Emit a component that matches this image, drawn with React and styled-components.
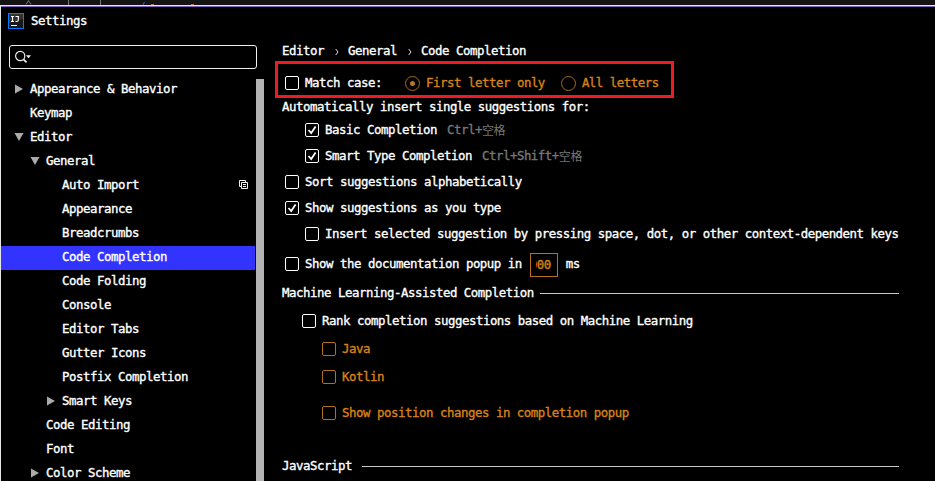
import React from 'react';
import styled, { createGlobalStyle } from 'styled-components';

const Global = createGlobalStyle`
  * { box-sizing: border-box; }
  body { margin: 0; background: #000; overflow: hidden; }
`;

const Screen = styled.div`
  width: 935px;
  height: 481px;
  display: flex;
  flex-direction: column;
  overflow: hidden;
  background: #000;
  color: #fff;
  font: 12.4px/16px 'DejaVu Sans Mono', 'Noto Sans CJK SC', monospace;
  letter-spacing: -0.465px;
  -webkit-text-stroke: 0.35px currentColor;
  white-space: pre;
`;
const Backdrop = styled.div`
  height: 5px;
  flex: none;
  background: #141414;
  svg { display: block; }
`;
const Dialog = styled.div`
  flex: 1;
  min-height: 0;
  display: flex;
  flex-direction: column;
  border-top: 1px solid #e6e6ee;
  border-left: 1px solid #e6e6e6;
`;
const TitleBar = styled.header`
  height: 29px;
  flex: none;
  display: flex;
  align-items: center;
  gap: 7px;
  padding-left: 7px;
  border-top: 1px solid #8360bf;
`;
const Body = styled.div`
  flex: 1;
  min-height: 0;
  display: flex;
`;
const Sidebar = styled.aside`
  width: 273px;
  flex: none;
  padding-top: 10px;
`;
const Search = styled.div`
  width: 248px;
  height: 24px;
  margin: 0 0 9px 8px;
  padding-left: 5px;
  display: flex;
  align-items: center;
  border: 1px solid #f0f0f0;
  border-radius: 3px;
`;
const TreeArea = styled.div`
  display: flex;
`;
const Tree = styled.nav`
  width: 254px;
`;
const ScrollBar = styled.div`
  width: 8px;
  margin: 1px 0 0 1px;
  background: #b3b3b3;
`;
const TreeRow = styled.div`
  height: 24px;
  display: flex;
  align-items: center;
  padding: 0 7px 3px ${p => 13 + p.$level * 16}px;
  background: ${p => (p.$selected ? '#3333ff' : 'transparent')};
`;
const Arrow = styled.span`
  width: 16px;
  height: 10px;
  flex: none;
  margin-top: 1px;
  svg { display: block; }
`;
const TreeLabel = styled.span`
  flex: 1;
`;
const Content = styled.main`
  flex: 1;
  padding: 8px 36px 0 8px;
`;
const Row = styled.div`
  height: ${p => p.$h || 26}px;
  display: flex;
  align-items: center;
  padding-left: ${p => p.$indent || 0}px;
  color: ${p => (p.$disabled ? '#d98218' : '#fff')};
`;
const Highlight = styled.div`
  width: 399px;
  height: 37px;
  margin: 2px 0 0 -7px;
  padding: 3px 0 0 7px;
  border: 3px solid #ed1c24;
  display: flex;
  align-items: flex-start;
`;
const HighlightRow = styled(Row)`
  height: 32px;
  margin: 0 0 0 -3px;
`;
const Box = styled.span`
  width: 14px;
  height: 14px;
  flex: none;
  margin-right: 6px;
  border: 1px solid ${p => (p.$disabled ? '#b06f22' : '#fff')};
  border-radius: 2px;
  svg { display: block; }
`;
const Radio = styled.span`
  width: 15px;
  height: 15px;
  flex: none;
  display: grid;
  place-items: center;
  margin: 0 6px 0 ${p => p.$gap}px;
  border: 1px solid #a66a22;
  border-radius: 50%;
`;
const Dot = styled.span`
  width: 5px;
  height: 5px;
  border-radius: 50%;
  background: #b5762b;
`;
const Label = styled.span`
  margin-top: -1px;
  color: ${p => (p.$amber ? '#d98218' : 'inherit')};
`;
const Shortcut = styled(Label)`
  margin-left: 10px;
  color: #777;
  display: flex;
`;
const Cjk = styled.span`
  font-family: 'Noto Sans CJK SC', sans-serif;
  font-size: 12px;
  letter-spacing: -0.3px;
  -webkit-text-stroke: 0;
`;
const Delay = styled.span`
  width: 28px;
  height: 24px;
  margin: 2px 8px 0 8px;
  padding: 0 6px 0 5px;
  display: flex;
  align-items: center;
  border: 1px solid #b87020;
  color: #d98218;
`;
const DelayText = styled.span`
  width: 15px;
  overflow: hidden;
  display: flex;
  justify-content: flex-end;
`;
const Rule = styled.span`
  flex: 1;
  height: 1px;
  margin: 0 0 0 ${p => p.$gap}px;
  background: #c8c8c8;
`;
const Separator = styled.svg`
  margin: 1px 9px 0 11px;
`;

const LogoIcon = () => (
  <svg width="16" height="16" viewBox="0 0 16 16" fill="none">
    <rect x=".5" y=".5" width="15" height="15" fill="#17181b" stroke="#087cfa" />
    <path d="M1 1h14v5L1 10z" fill="#444" opacity=".6" />
    <path d="M3 3.5h3M4.5 3.5v5M3 8.500h3M7.500 3.500h3.500M10.300 3.500V7q0 1.500-1.500 1.500H7.500" stroke="#fff" strokeWidth="1.100" />
    <path d="M3 12.500h6" stroke="#fff" />
  </svg>
);

const SearchIcon = () => (
  <svg width="18" height="14" viewBox="0 0 18 14" fill="none">
    <circle cx="5.2" cy="6" r="4.6" stroke="#eee" strokeWidth="1.2" />
    <path d="M8.5 9.3l3 3" stroke="#eee" strokeWidth="1.7" />
    <path d="M11 5.2h5l-2.5 3z" fill="#eee" />
  </svg>
);

const CopyIcon = () => (
  <svg width="9" height="9" viewBox="0 0 9 9" fill="none" stroke="#f2f2f2">
    <path d="M2 6.5H.5v-6h6V2M2.5 2.5h6v6h-6zM4 4.5h3M4 6.5h3" />
  </svg>
);

const TreeArrow = ({ state }) => (
  <Arrow>
    <svg width="10" height="10" viewBox="0 0 10 10" fill="#ababab">
      {state === 'open' && <path d="M.5 1h9L5 9z" />}
      {state === 'closed' && <path d="M1 .5v9L9 5z" />}
    </svg>
  </Arrow>
);

const Check = ({ on, disabled }) => (
  <Box $disabled={disabled}>
    {on && (
      <svg width="12" height="12" viewBox="0 0 12 12" fill="none">
        <path d="M2.5 6l2.7 3L9.6 2.6" stroke="#fff" strokeWidth="1.8" />
      </svg>
    )}
  </Box>
);

const Chevron = () => (
  <Separator width="4" height="8" viewBox="0 0 4 8" fill="none">
    <path d="M.7 1l2.3 3L.7 7" stroke="#ddd" />
  </Separator>
);

const tree = [
  ['Appearance & Behavior', 0, 'closed'],
  ['Keymap', 0],
  ['Editor', 0, 'open'],
  ['General', 1, 'open'],
  ['Auto Import', 2],
  ['Appearance', 2],
  ['Breadcrumbs', 2],
  ['Code Completion', 2],
  ['Code Folding', 2],
  ['Console', 2],
  ['Editor Tabs', 2],
  ['Gutter Icons', 2],
  ['Postfix Completion', 2],
  ['Smart Keys', 2, 'closed'],
  ['Code Editing', 1],
  ['Font', 1],
  ['Color Scheme', 1, 'closed'],
];

const Option = ({ label, on, disabled, indent = 3, h, children }) => (
  <Row $indent={indent} $disabled={disabled} $h={h}>
    <Check on={on} disabled={disabled} />
    <Label>{label}</Label>
    {children}
  </Row>
);

export default function App() {
  return (
    <Screen>
      <Global />
      <Backdrop>
        <svg width="200" height="5" viewBox="0 0 200 5" fill="none">
          <path d="M26 4.5l2.5-4 2.5 4M68.5 0v5M100.5 0v5" stroke="#777" />
          <path d="M143 5l1.5-3" stroke="#4860b8" />
          <path d="M151 4.5h3M191 4.5h3" stroke="#b87020" />
        </svg>
      </Backdrop>
      <Dialog>
        <TitleBar>
          <LogoIcon />
          <Label>Settings</Label>
        </TitleBar>
        <Body>
          <Sidebar>
            <Search><SearchIcon /></Search>
            <TreeArea>
              <Tree>
                {tree.map(([name, level, state]) => (
                  <TreeRow key={name} $level={level} $selected={name === 'Code Completion'}>
                    <TreeArrow state={state} />
                    <TreeLabel>{name}</TreeLabel>
                    {name === 'Auto Import' && <CopyIcon />}
                  </TreeRow>
                ))}
              </Tree>
              <ScrollBar />
            </TreeArea>
          </Sidebar>
          <Content>
            <Row $h={16}>
              <Label>Editor</Label><Chevron />
              <Label>General</Label><Chevron />
              <Label>Code Completion</Label>
            </Row>
            <Highlight>
              <HighlightRow $indent={3}>
                <Check />
                <Label>Match case:</Label>
                <Radio $gap={23}><Dot /></Radio>
                <Label $amber>First letter only</Label>
                <Radio $gap={16} />
                <Label $amber>All letters</Label>
              </HighlightRow>
            </Highlight>
            <Row $h={19}><Label>Automatically insert single suggestions for:</Label></Row>
            <Option label="Basic Completion" on indent={23}>
              <Shortcut>Ctrl+<Cjk>空格</Cjk></Shortcut>
            </Option>
            <Option label="Smart Type Completion" on indent={23}>
              <Shortcut>Ctrl+Shift+<Cjk>空格</Cjk></Shortcut>
            </Option>
            <Option label="Sort suggestions alphabetically" />
            <Option label="Show suggestions as you type" on />
            <Option label="Insert selected suggestion by pressing space, dot, or other context-dependent keys" indent={23} />
            <Option label="Show the documentation popup in" h={34}>
              <Delay><DelayText>000</DelayText></Delay>
              <span>ms</span>
            </Option>
            <Row $h={25}><Label>Machine Learning-Assisted Completion</Label><Rule $gap={6} /></Row>
            <Option label="Rank completion suggestions based on Machine Learning" indent={20} h={30} />
            <Option label="Java" disabled indent={40} />
            <Option label="Kotlin" disabled indent={40} h={30} />
            <Option label="Show position changes in completion popup" disabled indent={40} h={42} />
            <Row $h={64}><Label>JavaScript</Label><Rule $gap={10} /></Row>
          </Content>
        </Body>
      </Dialog>
    </Screen>
  );
}
